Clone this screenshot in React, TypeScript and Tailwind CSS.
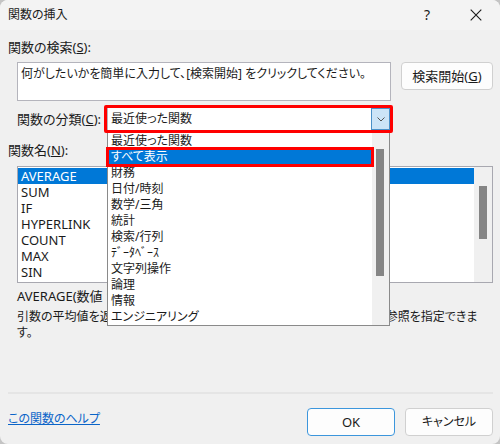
import { useState } from 'react'

const categories = [
  '最近使った関数', 'すべて表示', '財務', '日付/時刻', '数学/三角', '統計',
  '検索/行列', 'データベース', '文字列操作', '論理', '情報', 'エンジニアリング',
]

const functions = ['AVERAGE', 'SUM', 'IF', 'HYPERLINK', 'COUNT', 'MAX', 'SIN']

// half-width labels as Windows shows them
const shortLabels: Record<string, string> = { 'データベース': 'ﾃﾞｰﾀﾍﾞｰｽ' }

export default function App() {
  const [category, setCategory] = useState('最近使った関数')
  const [hovered, setHovered] = useState('すべて表示')
  const [selected, setSelected] = useState('AVERAGE')
  const [query, setQuery] = useState('何がしたいかを簡単に入力して、[検索開始] をクリックしてください。')

  return (
    <div className="bg-[#c4c4c4]">
      <div className="flex min-h-screen flex-col overflow-hidden rounded-lg bg-[#f0f0f0] font-['Noto_Sans','Noto_Sans_CJK_JP',sans-serif] text-[13px] leading-4 text-[#1a1a1a] [font-feature-settings:'palt']">
        {/* Title bar */}
        <header className="flex h-[30px] items-center bg-[#f3f3f3] pl-2">
          <h1 className="flex-1 text-xs">関数の挿入</h1>
          <button className="w-[50px] text-sm" aria-label="ヘルプ">?</button>
          <button className="flex w-12 justify-center" aria-label="閉じる">
            <svg className="size-3" viewBox="0 0 12 12" fill="none" stroke="#1a1a1a" strokeWidth="1.1">
              <path d="M.7.7l10.6 10.6M11.3.7L.7 11.3" />
            </svg>
          </button>
        </header>

        <main className="flex flex-1 flex-col pr-[7px] pl-2">
          <label htmlFor="query" className="mt-[9px]">関数の検索(<u>S</u>):</label>
          <div className="mt-[7px] flex items-start gap-[10px] pl-[9px]">
            <textarea
              id="query"
              value={query}
              onChange={e => setQuery(e.target.value)}
              className="h-[39px] min-w-0 flex-1 resize-none overflow-hidden border border-[#b4b4bc] bg-white px-[3px] py-[3px] text-xs leading-4 outline-none"
            />
            <button className="h-7 w-[92px] rounded border border-[#d0d0d0] bg-[#fdfdfd]">検索開始(<u>G</u>)</button>
          </div>

          {/* Category with its list open */}
          <div className="mt-1 flex items-center pr-[100px] pl-[9px]">
            <label htmlFor="category" className="w-[87px] whitespace-nowrap">関数の分類(<u>C</u>):</label>
            <div className="relative h-7 min-w-0 flex-1 p-[3px]">
              <select
                id="category"
                value={category}
                onChange={e => setCategory(e.target.value)}
                className="block h-full w-full appearance-none border-l border-[#b4b4bc] bg-white pl-[3px] text-xs outline-none"
              >
                {categories.map(c => <option key={c}>{c}</option>)}
              </select>
              <span className="pointer-events-none absolute inset-y-[3px] right-[3px] flex w-[19px] items-center justify-center border border-[#4a90c8] bg-[#cce4f7]">
                <svg className="h-[5px] w-2" viewBox="0 0 8 5" fill="none" stroke="#555">
                  <path d="M.5.5L4 4 7.5.5" />
                </svg>
              </span>
              <div className="absolute top-[27px] right-[3px] left-[3px] z-10 flex border border-t-0 border-[#8a8a8a] bg-white text-xs">
                <ul role="listbox" aria-label="関数の分類" className="min-w-0 flex-1 pt-px">
                  {categories.map(c => (
                    <li
                      key={c}
                      role="option"
                      aria-selected={c === hovered}
                      onMouseEnter={() => setHovered(c)}
                      className={c === hovered
                        ? 'relative h-4 bg-[#0078d7] pl-[3px] leading-4 text-white outline-3 -outline-offset-1 outline-[#ff0000]'
                        : 'h-4 pl-[3px] leading-4'}
                    >
                      {shortLabels[c] ?? c}
                    </li>
                  ))}
                </ul>
                <div className="w-[17px] bg-[#f0f0f0] pt-[17px] pl-1">
                  <div className="h-[127px] w-2 bg-[#858585]" />
                </div>
              </div>
              <span className="pointer-events-none absolute inset-0 z-20 rounded-xs border-3 border-[#ff0000]" />
            </div>
          </div>

          <h2 className="mt-[9px]">関数名(<u>N</u>):</h2>
          <div className="mt-2 ml-[9px] flex border border-[#a8a8b0] bg-white">
            <ul role="listbox" aria-label="関数名" className="min-w-0 flex-1 pt-px pb-0.5">
              {functions.map(f => (
                <li
                  key={f}
                  role="option"
                  aria-selected={f === selected}
                  onClick={() => setSelected(f)}
                  className={f === selected ? 'h-4 bg-[#0078d7] pl-[3px] text-white' : 'h-4 pl-[3px]'}
                >
                  {f}
                </li>
              ))}
            </ul>
            <div className="w-[18px] bg-[#f0f0f0] pt-[19px] pl-[5px]">
              <div className="h-[53px] w-2 bg-[#858585]" />
            </div>
          </div>

          <p className="mt-[5px] pl-[9px]">AVERAGE(数値 1, 数値 2, ...)</p>
          <p className="mt-[5px] pr-[10px] pl-[9px] text-xs leading-4">
            引数の平均値を返します。 引数には、 数値、 数値を含む名前、 配列、セル参照を指定できます。
          </p>

          <footer className="mt-auto flex items-start gap-[10px] border-t-2 border-[#e5e5e5] pt-[14px] pb-2">
            <div className="flex-1 pt-0.5">
              <a href="#help" className="text-xs text-[#0a64c8] underline">この関数のヘルプ</a>
            </div>
            <button className="h-7 w-[88px] rounded border border-[#3c96dc] bg-[#fdfdfd]">OK</button>
            <button className="h-7 w-[88px] rounded border border-[#d0d0d0] bg-[#fdfdfd] text-xs">キャンセル</button>
          </footer>
        </main>
      </div>
    </div>
  )
}
